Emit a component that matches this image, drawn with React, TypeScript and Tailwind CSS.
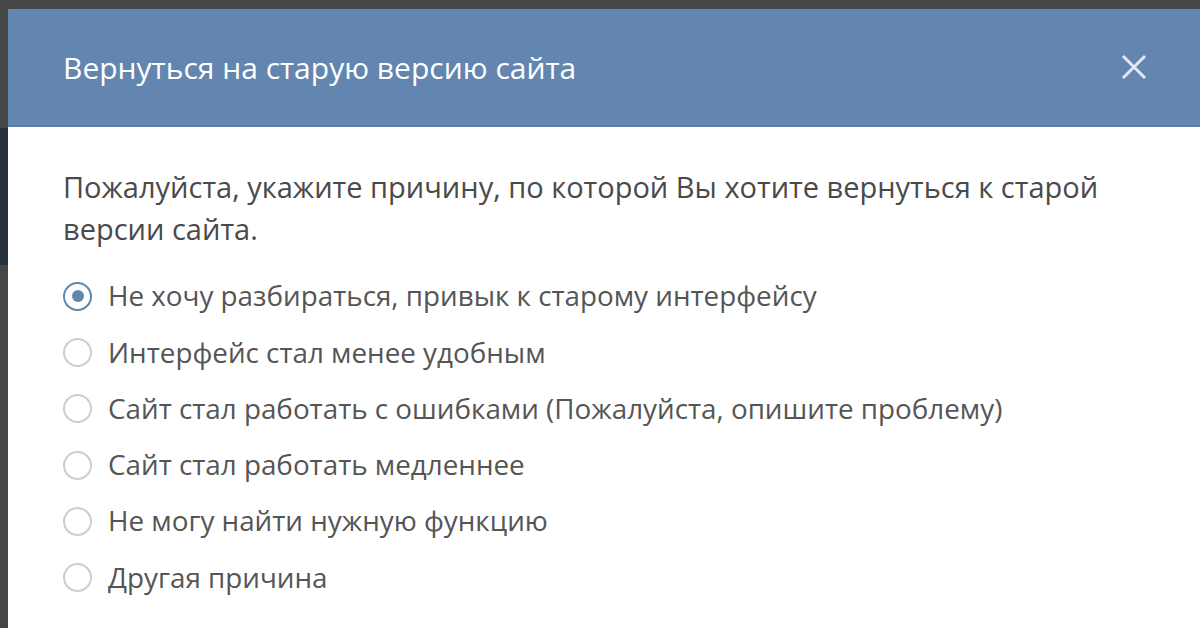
import React, { useState } from "react";

const reasons = [
  "Не хочу разбираться, привык к старому интерфейсу",
  "Интерфейс стал менее удобным",
  "Сайт стал работать с ошибками (Пожалуйста, опишите проблему)",
  "Сайт стал работать медленнее",
  "Не могу найти нужную функцию",
  "Другая причина",
];

export default function App() {
  const [selected, setSelected] = useState(0);

  return (
    <div
      className="flex h-[628px] w-[1200px] overflow-hidden bg-[#474747]"
      style={{ fontFamily: '"Open Sans", "Noto Sans", sans-serif' }}
    >
      {/* page behind the overlay */}
      <div className="flex w-2 shrink-0 flex-col">
        <div className="h-[128px] bg-[#474747]" />
        <div className="h-[137px] bg-[#28323d]" />
        <div className="flex-1 bg-[#464646]" />
      </div>

      {/* modal */}
      <div className="mt-[9px] flex flex-1 flex-col overflow-hidden rounded-tl-[3px] bg-white">
        <div className="flex h-[118px] shrink-0 items-center justify-between border-b-2 border-[#5a7ea7] bg-[#6286b0] pl-[55px] pr-[50px]">
          <h1 className="text-[30px] font-normal text-white">Вернуться на старую версию сайта</h1>
          <button className="flex h-8 w-8 items-center justify-center text-[#e3e9f0]">
            <svg width="28" height="28" viewBox="0 0 28 28" fill="none">
              <path d="M3 3L25 25M25 3L3 25" stroke="currentColor" strokeWidth="3" />
            </svg>
          </button>
        </div>

        <div className="pl-[55px] pt-[39px]">
          <p className="w-[1080px] text-[29px] leading-[42px] text-[#4a4a4a]">
            Пожалуйста, укажите причину, по которой Вы хотите вернуться к старой версии сайта.
          </p>
          <div className="mt-[18px] flex flex-col">
            {reasons.map((r, i) => (
              <label
                key={r}
                className="flex h-[56.3px] cursor-pointer items-center gap-4"
                onClick={() => setSelected(i)}
              >
                <span
                  className={
                    i === selected
                      ? "flex h-[29px] w-[29px] items-center justify-center rounded-full border-2 border-[#6286b0]"
                      : "flex h-[29px] w-[29px] items-center justify-center rounded-full border-2 border-[#c9ced6]"
                  }
                >
                  {i === selected && <span className="h-3 w-3 rounded-full bg-[#6286b0]" />}
                </span>
                <span className="text-[27.8px] text-[#555555]">{r}</span>
              </label>
            ))}
          </div>
        </div>
      </div>
    </div>
  );
}
